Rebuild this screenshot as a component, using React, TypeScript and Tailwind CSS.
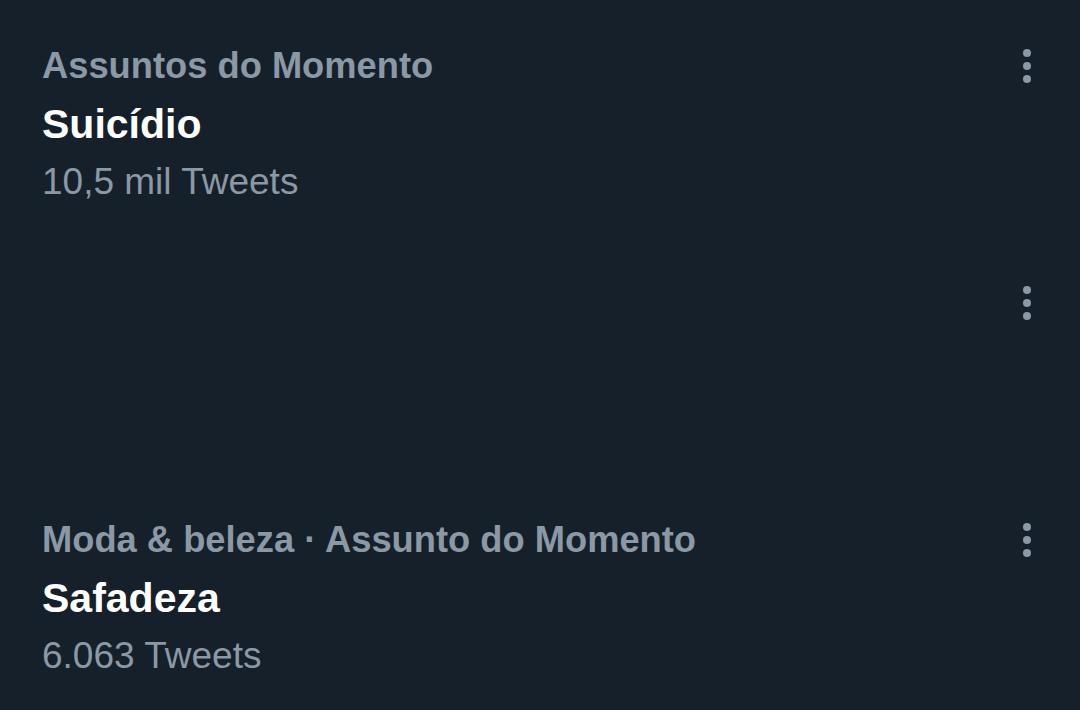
import { useState } from "react";

interface Trend {
  id: string;
  context?: string;
  title?: string;
  count?: string;
}

const trends: Trend[] = [
  { id: "1", context: "Assuntos do Momento", title: "Suicídio", count: "10,5 mil Tweets" },
  { id: "2" },
  { id: "3", context: "Moda & beleza · Assunto do Momento", title: "Safadeza", count: "6.063 Tweets" },
];

function MoreIcon() {
  return (
    <svg width="10" height="34" viewBox="0 0 10 34" fill="#8b98a5">
      <circle cx="5" cy="4" r="4" />
      <circle cx="5" cy="17" r="4" />
      <circle cx="5" cy="30" r="4" />
    </svg>
  );
}

function TrendRow({ trend }: { trend: Trend }) {
  return (
    <div className="flex h-[237px] items-start justify-between pl-[42px] pr-[48px] pt-[37px]">
      <div className="flex flex-col">
        {trend.context && <span className="text-[36.3px] leading-[58px] font-bold text-[#8b98a5]">{trend.context}</span>}
        {trend.title && <span className="text-[41px] leading-[58px] font-bold text-white">{trend.title}</span>}
        {trend.count && <span className="text-[37px] leading-[58px] text-[#8b98a5]">{trend.count}</span>}
      </div>
      <button className="flex h-[58px] items-center">
        <MoreIcon />
      </button>
    </div>
  );
}

export default function App() {
  const [items] = useState(trends);

  return (
    <div className="h-[710px] w-[1080px] overflow-hidden bg-[#16202a] font-['Liberation_Sans',Arial,sans-serif]">
      {items.map((t) => (
        <TrendRow key={t.id} trend={t} />
      ))}
    </div>
  );
}
